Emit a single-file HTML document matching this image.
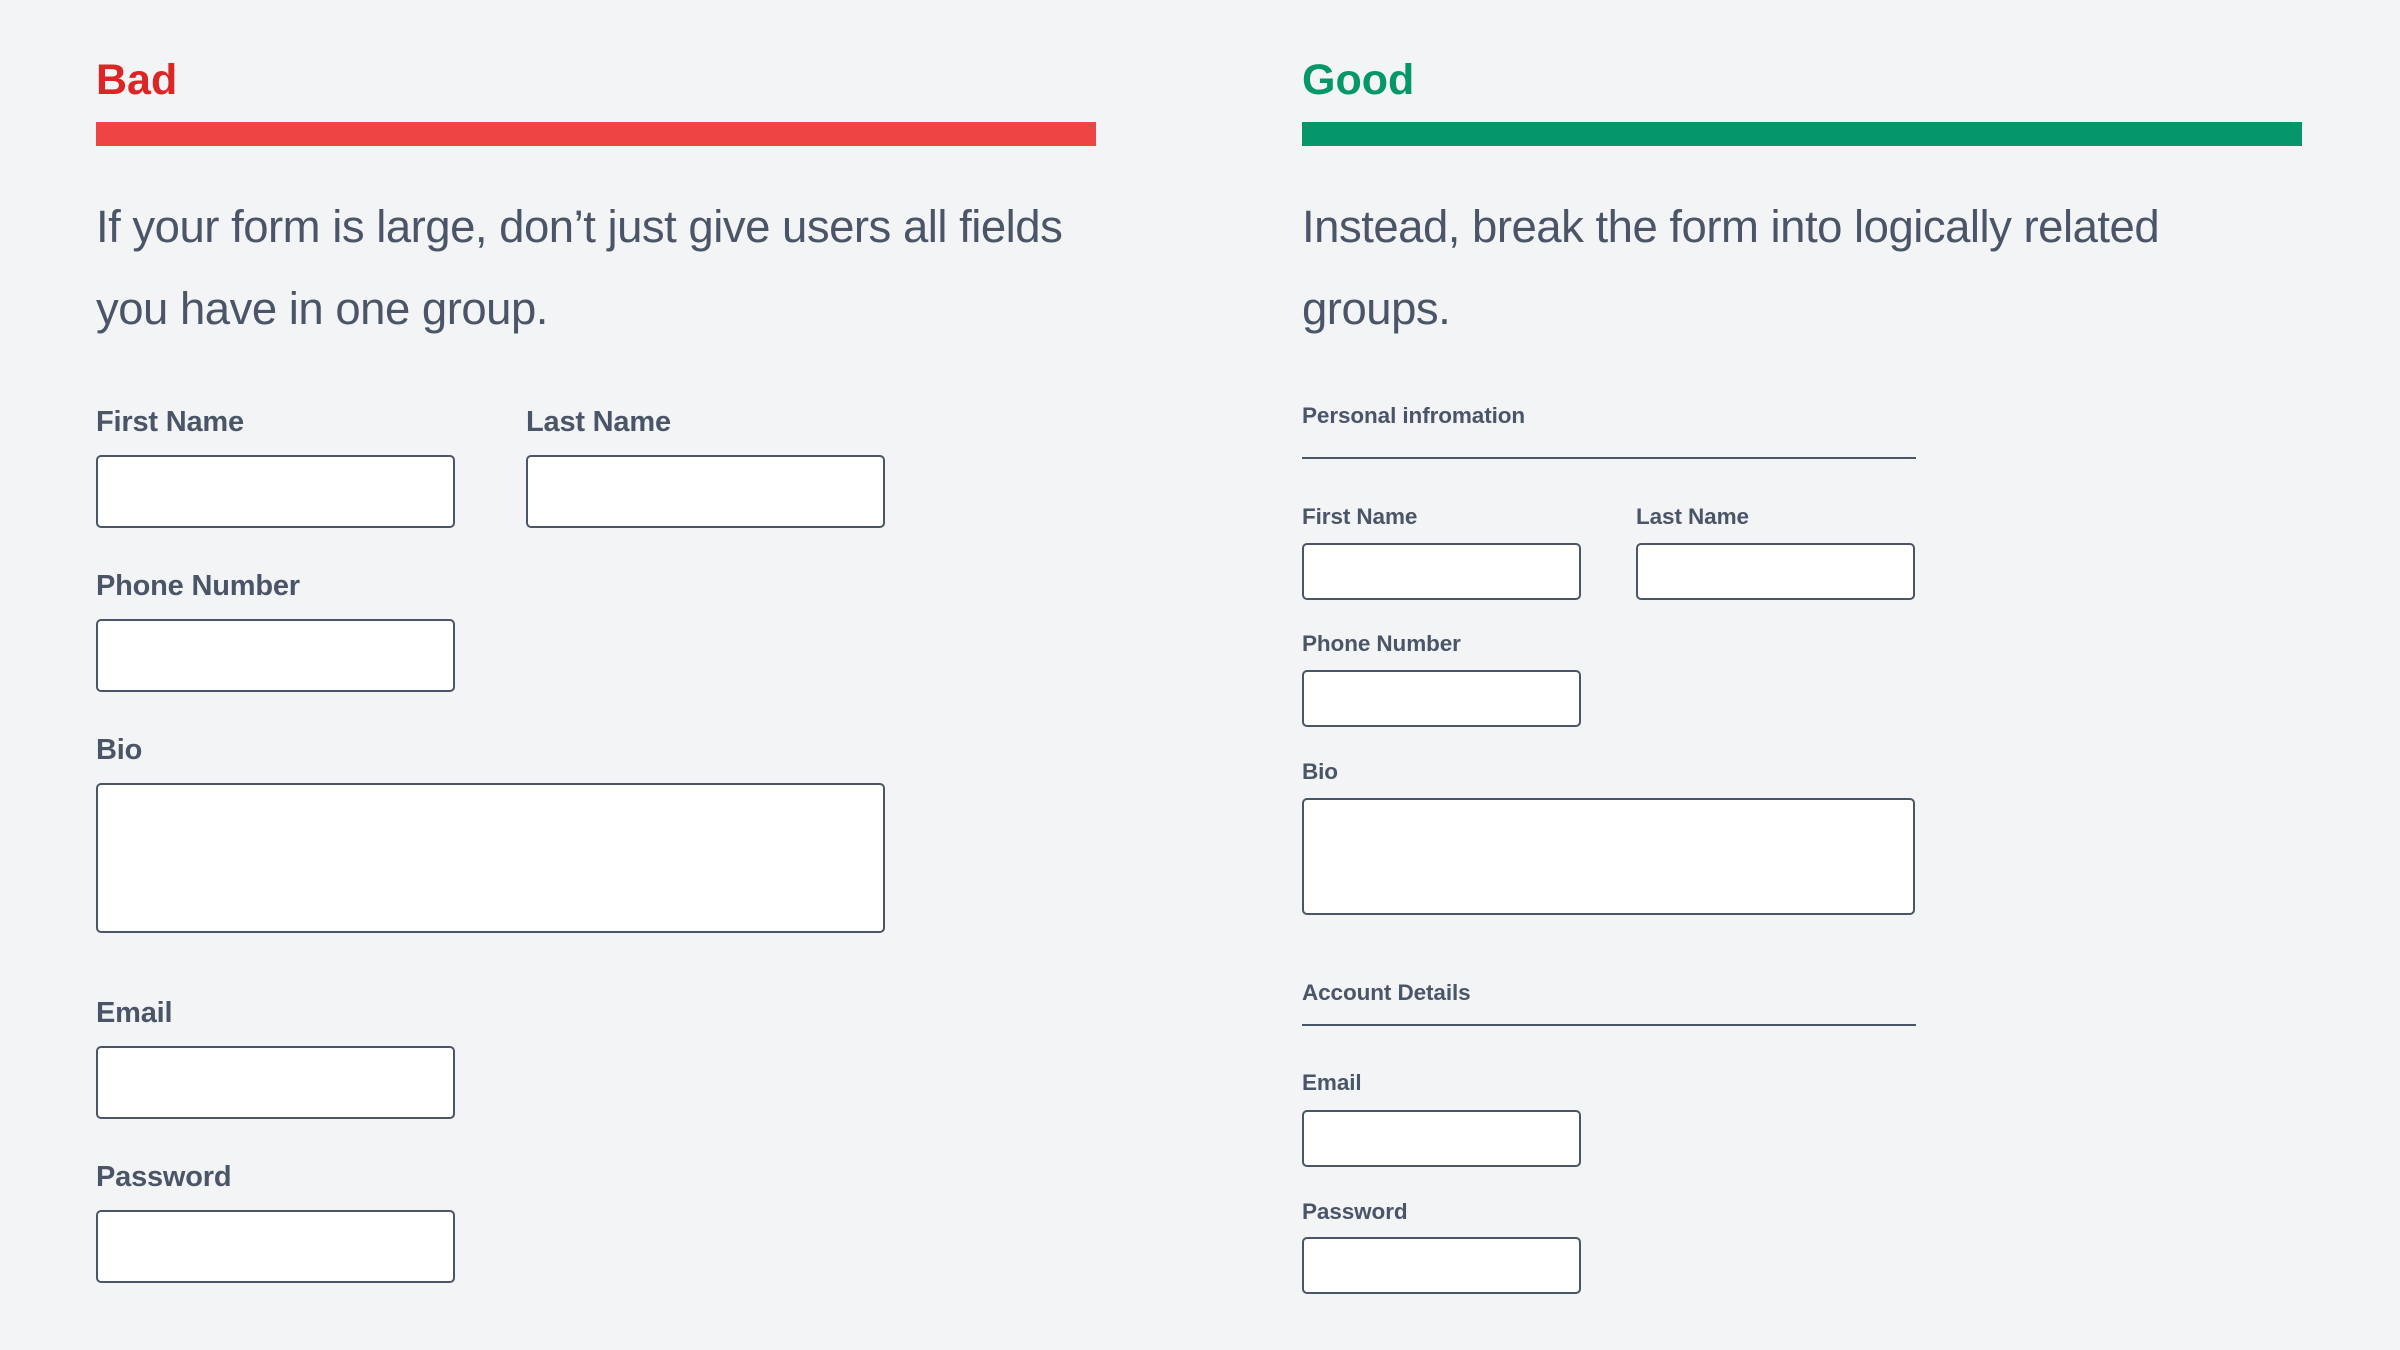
<!DOCTYPE html>
<html><head><meta charset="utf-8"><style>
body{margin:0;width:2400px;height:1350px;background:#f3f4f6;font-family:"Liberation Sans",sans-serif;color:#4a5568;position:relative;overflow:hidden}
.a{position:absolute;white-space:nowrap}
.h{font-size:43px;font-weight:bold;line-height:60px}
.p{font-size:45.5px;line-height:82px;letter-spacing:-0.5px}
.l{font-size:29px;font-weight:bold;line-height:40px;letter-spacing:-0.2px}
.s{font-size:22.5px;font-weight:bold;line-height:30px;letter-spacing:-0.1px}
.i{position:absolute;background:#fff;border:2px solid #4a5568;border-radius:5px;box-sizing:border-box}
.ln{position:absolute;height:2px;background:#4a5568}
</style></head><body>
<div class="a h" style="left:96px;top:50px;color:#dc2626">Bad</div>
<div class="a" style="left:96px;top:122px;width:1000px;height:24px;background:#ef4444"></div>
<div class="a p" style="left:96px;top:186px">If your form is large, don’t just give users all fields<br>you have in one group.</div>
<div class="a l" style="left:96px;top:402px">First Name</div>
<div class="a l" style="left:526px;top:402px">Last Name</div>
<div class="i" style="left:96px;top:455px;width:359px;height:73px"></div>
<div class="i" style="left:526px;top:455px;width:359px;height:73px"></div>
<div class="a l" style="left:96px;top:566px">Phone Number</div>
<div class="i" style="left:96px;top:619px;width:359px;height:73px"></div>
<div class="a l" style="left:96px;top:730px">Bio</div>
<div class="i" style="left:96px;top:783px;width:789px;height:150px"></div>
<div class="a l" style="left:96px;top:993px">Email</div>
<div class="i" style="left:96px;top:1046px;width:359px;height:73px"></div>
<div class="a l" style="left:96px;top:1157px">Password</div>
<div class="i" style="left:96px;top:1210px;width:359px;height:73px"></div>

<div class="a h" style="left:1302px;top:50px;color:#059669">Good</div>
<div class="a" style="left:1302px;top:122px;width:1000px;height:24px;background:#059669"></div>
<div class="a p" style="left:1302px;top:186px">Instead, break the form into logically related<br>groups.</div>
<div class="a s" style="left:1302px;top:401px">Personal infromation</div>
<div class="ln" style="left:1302px;top:457px;width:614px"></div>
<div class="a s" style="left:1302px;top:502px">First Name</div>
<div class="a s" style="left:1636px;top:502px">Last Name</div>
<div class="i" style="left:1302px;top:543px;width:279px;height:57px"></div>
<div class="i" style="left:1636px;top:543px;width:279px;height:57px"></div>
<div class="a s" style="left:1302px;top:629px">Phone Number</div>
<div class="i" style="left:1302px;top:670px;width:279px;height:57px"></div>
<div class="a s" style="left:1302px;top:757px">Bio</div>
<div class="i" style="left:1302px;top:798px;width:613px;height:117px"></div>
<div class="a s" style="left:1302px;top:978px">Account Details</div>
<div class="ln" style="left:1302px;top:1024px;width:614px"></div>
<div class="a s" style="left:1302px;top:1068px">Email</div>
<div class="i" style="left:1302px;top:1110px;width:279px;height:57px"></div>
<div class="a s" style="left:1302px;top:1197px">Password</div>
<div class="i" style="left:1302px;top:1237px;width:279px;height:57px"></div>
</body></html>
